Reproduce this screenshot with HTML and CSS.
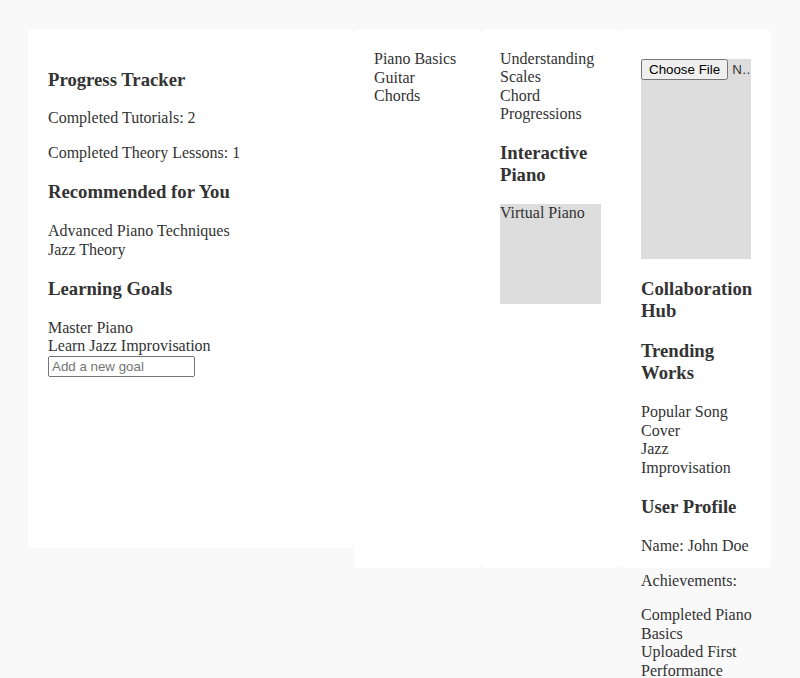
FILE: index.html
```html
<!DOCTYPE html>
<html lang="en">
<head>
<meta charset="utf-8">
<title>Music Learning Dashboard</title>
<link rel="stylesheet" href="styles.css">
</head>
<body>
<main class="cards">
  <section class="card card-progress">
    <h3>Progress Tracker</h3>
    <p>Completed Tutorials: 2</p>
    <p>Completed Theory Lessons: 1</p>
    <h3>Recommended for You</h3>
    <ul class="list">
      <li>Advanced Piano Techniques</li>
      <li>Jazz Theory</li>
    </ul>
    <h3>Learning Goals</h3>
    <ul class="list">
      <li>Master Piano</li>
      <li>Learn Jazz Improvisation</li>
    </ul>
    <input class="goal-input" type="text" placeholder="Add a new goal">
  </section>
  <section class="card card-tutorials">
    <ul class="list">
      <li>Piano Basics</li>
      <li>Guitar Chords</li>
    </ul>
  </section>
  <section class="card card-theory">
    <ul class="list">
      <li>Understanding Scales</li>
      <li>Chord Progressions</li>
    </ul>
    <h3>Interactive Piano</h3>
    <div class="piano-box">Virtual Piano</div>
  </section>
  <section class="card card-collab">
    <div class="upload-box">
      <input class="file-input" type="file">
    </div>
    <h3>Collaboration Hub</h3>
    <h3>Trending Works</h3>
    <ul class="list">
      <li>Popular Song Cover</li>
      <li>Jazz Improvisation</li>
    </ul>
    <h3>User Profile</h3>
    <p>Name: John Doe</p>
    <p>Achievements:</p>
    <ul class="list achievements">
      <li>Completed Piano Basics</li>
      <li>Uploaded First Performance</li>
    </ul>
  </section>
</main>
</body>
</html>
```
FILE: styles.css
```css
html, body {
  background: #f9f9f9;
}
body {
  margin: 0;
  padding: 29px 28px 160px;
  font-family: "Liberation Serif", "Times New Roman", serif;
  font-size: 16px;
  line-height: 18.6px;
  color: #333;
}
.cards {
  display: flex;
  align-items: stretch;
  height: 539px;
}
.card {
  background: #fff;
  border-radius: 5px;
  padding: 20px;
  box-sizing: border-box;
  flex: none;
  overflow: visible;
}
.card-progress {
  width: 326px;
  margin-bottom: 20px;
  padding-top: 21px;
}
.card-tutorials {
  width: 127px;
  padding-top: 21px;
}
.card-theory {
  width: 140px;
  padding-left: 19px;
  padding-right: 20px;
  padding-top: 21px;
}
.card-theory .list {
  line-height: 18.4px;
}
.card-theory h3 {
  line-height: 21.4px;
}
.card-collab {
  width: 150px;
}
h3 {
  font-size: 18.72px;
  line-height: 22px;
  font-weight: bold;
  margin: 18.72px 0;
}
p {
  margin: 16px 0;
}
.list {
  list-style: none;
  margin: 0;
  padding: 0;
}
.achievements {
  margin-right: -6px;
}
.goal-input {
  font-family: "Liberation Sans", Arial, sans-serif;
  font-size: 13.33px;
  line-height: normal;
  width: 147px;
  box-sizing: border-box;
  margin: 0;
  display: block;
}
.piano-box {
  background: #ddd;
  height: 100px;
}
.upload-box {
  background: #ddd;
  height: 200px;
  margin: 10px 0;
}
.file-input {
  width: 100%;
  font-family: "Liberation Sans", Arial, sans-serif;
  font-size: 13.33px;
  line-height: normal;
  margin: 0;
}
```
